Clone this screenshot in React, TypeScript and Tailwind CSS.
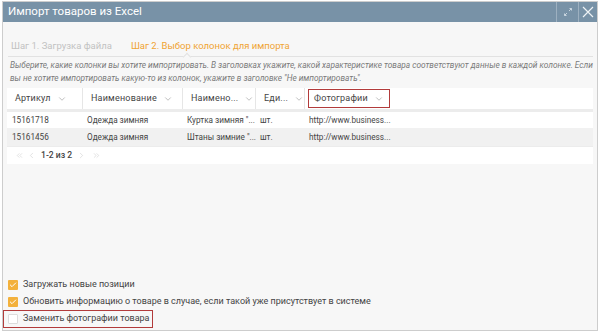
import { ChevronDown, ChevronLeft, ChevronRight, ChevronsLeft, ChevronsRight, Check } from "lucide-react";

const columns = [
  { label: "Артикул", width: "w-[75px]" },
  { label: "Наименование", width: "w-[100px]" },
  { label: "Наимено...", width: "w-[73px]" },
  { label: "Еди...", width: "w-[49px]" },
];

const rows = [
  ["15161718", "Одежда зимняя", "Куртка зимняя \"...", "шт.", "http://www.business..."],
  ["15161456", "Одежда зимняя", "Штаны зимние \"...", "шт.", "http://www.business..."],
];

const cellWidths = ["w-[75px]", "w-[100px]", "w-[73px]", "w-[49px]", "w-[100px]"];

const options = [
  { label: "Загружать новые позиции", checked: true },
  { label: "Обновить информацию о товаре в случае, если такой уже присутствует в системе", checked: true },
];

const App = () => {
  return (
    <div className="w-[600px] h-[332px] bg-white pt-[1px] pl-[2px] font-['Roboto',sans-serif]">
      <div className="w-[596px] h-[330px] border border-[#cdcdcd] bg-[#f7f7f7] flex flex-col">
        {/* title bar */}
        <div className="h-[20px] bg-[#7892a7] flex items-center shrink-0">
          <span className="pl-[5px] text-[11.5px] text-white flex-1">Импорт товаров из Excel</span>
          <button className="w-[22px] h-full border-l border-[#9db0c0] flex items-center justify-center">
            <svg width="10" height="10" viewBox="0 0 10 10" fill="none" stroke="#c9d5df" strokeWidth="1">
              <path d="M6.5 1.5h2v2M8.5 1.5L6 4M3.5 8.5h-2v-2M1.5 8.5L4 6" />
            </svg>
          </button>
          <button className="w-[19px] h-full border-l border-[#9db0c0] flex items-center justify-center">
            <svg width="12" height="12" viewBox="0 0 12 12" fill="none" stroke="#eef2f5" strokeWidth="1.2">
              <path d="M1 1l10 10M11 1L1 11" />
            </svg>
          </button>
        </div>

        <div className="flex-1 flex flex-col pl-[4px] pr-[4px]">
          {/* steps */}
          <div className="relative mt-[14px] h-[21px] border-b border-[#e2e2e2] flex items-start gap-[19px] pt-[3px] pl-[3px] text-[9.5px] ml-[1px]">
            <span className="text-[#c2c2c2]">Шаг 1. Загрузка файла</span>
            <span className="text-[#f0a434]">Шаг 2. Выбор колонок для импорта</span>
            <span className="absolute left-[176px] bottom-[-4px] w-[6px] h-[6px] rotate-45 bg-[#f7f7f7] border-l border-t border-[#e2e2e2]" />
          </div>

          {/* description */}
          <p className="mt-[2px] pl-[3px] text-[8.3px] leading-[13px] italic text-[#7a7a7a]">
            Выберите, какие колонки вы хотите импортировать. В заголовках укажите, какой характеристике товара соответствуют данные в каждой колонке. Если вы не хотите импортировать какую-то из колонок, укажите в заголовке "Не импортировать".
          </p>

          {/* table */}
          <div className="mt-[3px] flex flex-col">
            <div className="h-[21px] bg-white flex items-center text-[9px] text-[#444] tracking-[0.2px]">
              {columns.map((c, i) => (
                <div key={i} className={`${c.width} shrink-0 h-full flex items-center pl-[8px] pr-[3px] gap-[6px] ${i > 0 ? "border-l border-[#e6e6e6]" : ""}`}>
                  <span className="whitespace-nowrap">{c.label}</span>
                  <ChevronDown size={10} strokeWidth={1.5} className="text-[#999] shrink-0" />
                </div>
              ))}
              <div className="h-full border-l border-[#e6e6e6] pl-[3px] py-[1px]">
                <div className="h-full w-[82px] border-[1.5px] border-[#b23b3b] flex items-center pl-[5px] gap-[6px]">
                  <span>Фотографии</span>
                  <ChevronDown size={10} strokeWidth={1.5} className="text-[#999] shrink-0" />
                </div>
              </div>
            </div>
            <div className="h-[3px] bg-[#ececec]" />
            {rows.map((r, ri) => (
              <div key={ri} className={`flex items-center text-[8.2px] text-[#444] ${ri === 0 ? "h-[16px] bg-white" : "h-[18px] bg-[#f1f1f1]"}`}>
                {r.map((v, ci) => (
                  <div key={ci} className={`${cellWidths[ci]} shrink-0 pl-[5px] whitespace-nowrap`}>
                    {v}
                  </div>
                ))}
              </div>
            ))}
            <div className="h-[1px] bg-[#ececec]" />
            <div className="h-[17px] bg-white flex items-center pl-[8px] gap-[3px] text-[8.6px]">
              <ChevronsLeft size={9} strokeWidth={1.3} className="text-[#c4c4c4]" />
              <ChevronLeft size={9} strokeWidth={1.3} className="text-[#c4c4c4]" />
              <span className="text-[#444] font-medium mx-[2px]">1-2 из 2</span>
              <ChevronRight size={9} strokeWidth={1.3} className="text-[#c4c4c4]" />
              <ChevronsRight size={9} strokeWidth={1.3} className="ml-[3px] text-[#c4c4c4]" />
            </div>
          </div>

          <div className="flex-1" />

          {/* options */}
          <div className="flex flex-col text-[9px] text-[#444] -ml-[4px] mb-[2px]">
            {options.map((o, i) => (
              <label key={i} className="h-[17px] flex items-center pl-[5px] gap-[5px]">
                <span className="w-[10px] h-[10px] rounded-[1px] bg-[#f3b13c] flex items-center justify-center">
                  <Check size={8} strokeWidth={3} className="text-white" />
                </span>
                <span>{o.label}</span>
              </label>
            ))}
            <label className="w-[150px] h-[18px] border-[1.5px] border-[#b23b3b] flex items-center pl-[4px] gap-[5px]">
              <span className="w-[10px] h-[10px] rounded-[1px] bg-white border border-[#dcdcdc]" />
              <span>Заменить фотографии товара</span>
            </label>
          </div>
        </div>
      </div>
    </div>
  );
};

export default App;
